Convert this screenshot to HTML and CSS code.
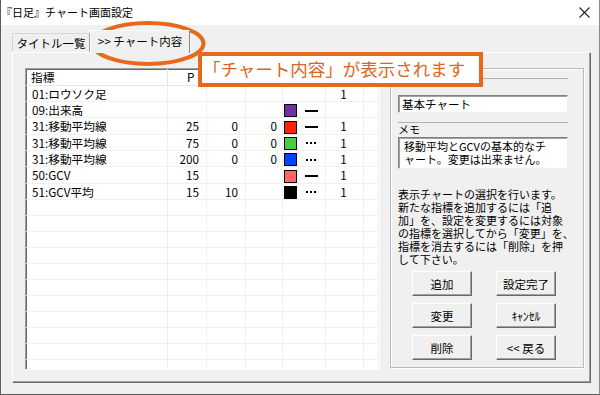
FILE: index.html
```html
<!DOCTYPE html>
<html lang="ja">
<head>
  <meta charset="UTF-8" />
  <title>『日足』チャート画面設定</title>
  <link rel="stylesheet" href="styles.css">
</head>
<body>

<div class="window">
  <div class="titlebar">
    <span class="title">『日足』チャート画面設定</span>
    <svg class="close" width="11" height="11" viewBox="0 0 11 11">
      <path d="M0.5 0.5 L10.5 10.5 M10.5 0.5 L0.5 10.5" stroke="#222" stroke-width="1.1" fill="none"/>
    </svg>
  </div>

  <div class="client">
    <div class="tabs">
      <div class="tab">タイトル一覧</div>
      <div class="tab active">&gt;&gt; チャート内容</div>
    </div>

    <div class="panel">
      <div class="list">
        <table>
          <colgroup>
            <col class="c-name"><col class="c-p"><col class="c-p"><col class="c-p3">
            <col class="c-color"><col class="c-show"><col>
          </colgroup>
          <tr class="head">
            <th>指標</th><th class="p">P</th><th></th><th></th><th></th><th></th><th></th>
          </tr>
          <tr>
            <td>01:ロウソク足</td><td></td><td></td><td></td><td></td><td class="ctr">1</td><td></td>
          </tr>
          <tr>
            <td>09:出来高</td><td></td><td></td><td></td>
            <td class="clr"><span class="swatch purple"></span><span class="solid"></span></td><td></td><td></td>
          </tr>
          <tr>
            <td>31:移動平均線</td><td class="num">25</td><td class="num">0</td><td class="num n3">0</td>
            <td class="clr"><span class="swatch red"></span><span class="solid"></span></td><td class="ctr">1</td><td></td>
          </tr>
          <tr>
            <td>31:移動平均線</td><td class="num">75</td><td class="num">0</td><td class="num n3">0</td>
            <td class="clr"><span class="swatch green"></span><span class="dots"></span></td><td class="ctr">1</td><td></td>
          </tr>
          <tr>
            <td>31:移動平均線</td><td class="num">200</td><td class="num">0</td><td class="num n3">0</td>
            <td class="clr"><span class="swatch blue"></span><span class="dots"></span></td><td class="ctr">1</td><td></td>
          </tr>
          <tr>
            <td>50:GCV</td><td class="num">15</td><td></td><td></td>
            <td class="clr"><span class="swatch salmon"></span><span class="solid"></span></td><td class="ctr">1</td><td></td>
          </tr>
          <tr>
            <td>51:GCV平均</td><td class="num">15</td><td class="num">10</td><td></td>
            <td class="clr"><span class="swatch black"></span><span class="dots"></span></td><td class="ctr">1</td><td></td>
          </tr>
          <tr><td></td><td></td><td></td><td></td><td></td><td></td><td></td></tr>
          <tr><td></td><td></td><td></td><td></td><td></td><td></td><td></td></tr>
          <tr><td></td><td></td><td></td><td></td><td></td><td></td><td></td></tr>
          <tr><td></td><td></td><td></td><td></td><td></td><td></td><td></td></tr>
          <tr><td></td><td></td><td></td><td></td><td></td><td></td><td></td></tr>
          <tr><td></td><td></td><td></td><td></td><td></td><td></td><td></td></tr>
          <tr><td></td><td></td><td></td><td></td><td></td><td></td><td></td></tr>
          <tr><td></td><td></td><td></td><td></td><td></td><td></td><td></td></tr>
          <tr><td></td><td></td><td></td><td></td><td></td><td></td><td></td></tr>
          <tr><td></td><td></td><td></td><td></td><td></td><td></td><td></td></tr>
          <tr><td></td><td></td><td></td><td></td><td></td><td></td><td></td></tr>
        </table>
      </div>

      <div class="group">
        <div class="caption first"></div>
        <div class="field">基本チャート</div>
        <div class="caption">メモ</div>
        <div class="memo">移動平均とGCVの基本的なチ<br>ャート。変更は出来ません。</div>
        <p class="help">
          表示チャートの選択を行います。<br>
          新たな指標を追加するには「追<br>
          加」を、設定を変更するには対象<br>
          の指標を選択してから「変更」を、<br>
          指標を消去するには「削除」を押<br>
          して下さい。
        </p>
        <div class="buttons">
          <button>追加</button>
          <button>設定完了</button>
          <button>変更</button>
          <button>ｷｬﾝｾﾙ</button>
          <button>削除</button>
          <button>&lt;&lt; 戻る</button>
        </div>
      </div>
    </div>
  </div>

  <svg class="ring" width="120" height="48" viewBox="0 0 120 48">
    <ellipse cx="59" cy="23.5" rx="55.5" ry="20.5" fill="none" stroke="#e8691e" stroke-width="4"/>
  </svg>
  <div class="callout">「チャート内容」が表示されます</div>
</div>

</body>
</html>
```

FILE: styles.css
```css
body {
  margin: 0;
  padding: 0;
  background: #fff;
  font-family: "Noto Sans CJK JP", "Noto Sans", sans-serif;
  color: #000;
}
.window {
  position: relative;
  width: 600px;
  height: 395px;
  box-sizing: border-box;
  border-left: 1px solid #5c5c5c;
  border-right: 1px solid #8a8a8a;
  border-bottom: 1px solid #5c5c5c;
  background: #f0f0f0;
  overflow: hidden;
}
.titlebar {
  height: 25px;
  background: #fff;
  display: flex;
  align-items: center;
  justify-content: space-between;
  padding: 0 9px 0 0;
}
.title {
  font-size: 11px;
  line-height: 14px;
  margin-top: -1px;
}
.close {
  display: block;
}
.client {
  padding: 5px 0 0 11px;
}
.tabs {
  display: flex;
  align-items: flex-end;
  height: 22px;
  position: relative;
  z-index: 1;
}
.tab {
  box-sizing: border-box;
  width: 78px;
  height: 19px;
  font-size: 11.5px;
  line-height: 18px;
  text-align: center;
  border: 1px solid #d6d6d6;
  border-bottom: none;
  border-right: 1px solid #a0a0a0;
}
.tab.active {
  width: 100px;
  height: 23px;
  margin-bottom: -1px;
  background: #f0f0f0;
  border-top: 1px solid #fff;
  border-left: 1px solid #fff;
  border-right: 1px solid #8a8a8a;
  line-height: 20px;
  text-align: left;
  padding-left: 7px;
}
.panel {
  box-sizing: border-box;
  width: 578px;
  height: 330px;
  border: 1px solid;
  border-color: #fff #a0a0a0 #a0a0a0 #fff;
  box-shadow: 1px 1px 0 #696969;
  padding: 15px 0 0 12px;
  display: flex;
  align-items: flex-start;
  gap: 10px;
}

/* list view */
.list {
  box-sizing: border-box;
  width: 355px;
  height: 302px;
  border: 1px solid;
  border-color: #a0a0a0 #fff #fff #a0a0a0;
  box-shadow: inset 1px 1px 0 #696969;
  background: #fff;
  overflow: hidden;
}
.list table {
  width: 353px;
  table-layout: fixed;
  border-collapse: separate;
  border-spacing: 0;
  font-size: 11.7px;
}
.c-name { width: 142px; }
.c-p { width: 39px; }
.c-p3 { width: 37px; }
.c-color { width: 43px; }
.c-show { width: 38px; }
.list th {
  height: 16px;
  padding: 0 0 0 5px;
  font-weight: normal;
  text-align: left;
  line-height: 16px;
  border-right: 1px solid #e5e5e5;
  border-bottom: 1px solid #e5e5e5;
  white-space: nowrap;
  overflow: hidden;
}
.list th.p {
  padding-left: 19px;
}
.list td {
  padding: 0 0 0 6px;
  line-height: 15px;
  height: 15px;
  border-right: 1px solid #f0f0f0;
  border-bottom: 1px solid #f0f0f0;
  white-space: nowrap;
  overflow: hidden;
}
.list td.num {
  text-align: right;
  padding: 0 7px 0 0;
}
.list td.n3 {
  padding-right: 5px;
}
.list td.ctr {
  text-align: center;
  padding: 0 2px 0 0;
}
.list td.clr {
  padding: 0 0 0 1px;
}
.swatch {
  display: inline-block;
  width: 11px;
  height: 11px;
  border: 1px solid #000;
  vertical-align: middle;
  margin-top: -2px;
}
.purple { background: #7030a0; }
.red { background: #ff2200; }
.green { background: #44d044; }
.blue { background: #0044ff; }
.salmon { background: #ff6666; }
.black { background: #000; }
.solid, .dots {
  display: inline-block;
  width: 13px;
  height: 2px;
  margin-left: 8px;
  vertical-align: middle;
  margin-top: -2px;
  background: #000;
}
.dots {
  width: 10px;
  margin-left: 9px;
  background: repeating-linear-gradient(90deg, #000 0 2px, transparent 2px 4px);
}

/* right group */
.group {
  box-sizing: border-box;
  width: 194px;
  height: 300px;
  border: 1px solid #b9b9b9;
  box-shadow: inset 1px 1px 0 #fff, 1px 1px 0 #fff;
  padding: 0 14px 0 7px;
}
.caption {
  height: 14px;
  border-top: 1px solid #b0b0b0;
  font-size: 11px;
  line-height: 13px;
  margin-top: 9px;
  width: 170px;
}
.caption.first {
  height: 16px;
}
.field, .memo {
  box-sizing: border-box;
  width: 170px;
  background: #fff;
  border: 1px solid;
  border-color: #828282 #f0f0f0 #f0f0f0 #828282;
  box-shadow: inset 1px 1px 0 #a0a0a0;
  font-size: 11.5px;
}
.field {
  height: 18px;
  line-height: 16px;
  padding-left: 3px;
}
.memo {
  height: 32px;
  line-height: 12.5px;
  padding: 2px 0 0 5px;
  font-size: 11px;
  white-space: nowrap;
}
.help {
  margin: 19px 0 0 0;
  font-size: 11px;
  line-height: 13px;
  white-space: nowrap;
}
.buttons {
  display: grid;
  grid-template-columns: 60px 60px;
  column-gap: 24px;
  row-gap: 7px;
  margin: 5px 0 0 14px;
}
.buttons button {
  box-sizing: border-box;
  height: 25px;
  padding: 0;
  font-family: "Noto Sans CJK JP", "Noto Sans", sans-serif;
  font-size: 11.5px;
  background: #f0f0f0;
  border: 1px solid;
  border-color: #fff #696969 #696969 #fff;
  box-shadow: inset -1px -1px 0 #a0a0a0;
  color: #000;
}

/* annotation overlays */
.ring {
  position: absolute;
  left: 88px;
  top: 20px;
}
.callout {
  position: absolute;
  left: 197px;
  top: 52px;
  width: 285px;
  height: 35px;
  box-sizing: border-box;
  border: 4px solid #e8691e;
  background: #fff;
  color: #e0651c;
  font-size: 17.5px;
  line-height: 26px;
  padding-left: 1px;
  white-space: nowrap;
}
```
